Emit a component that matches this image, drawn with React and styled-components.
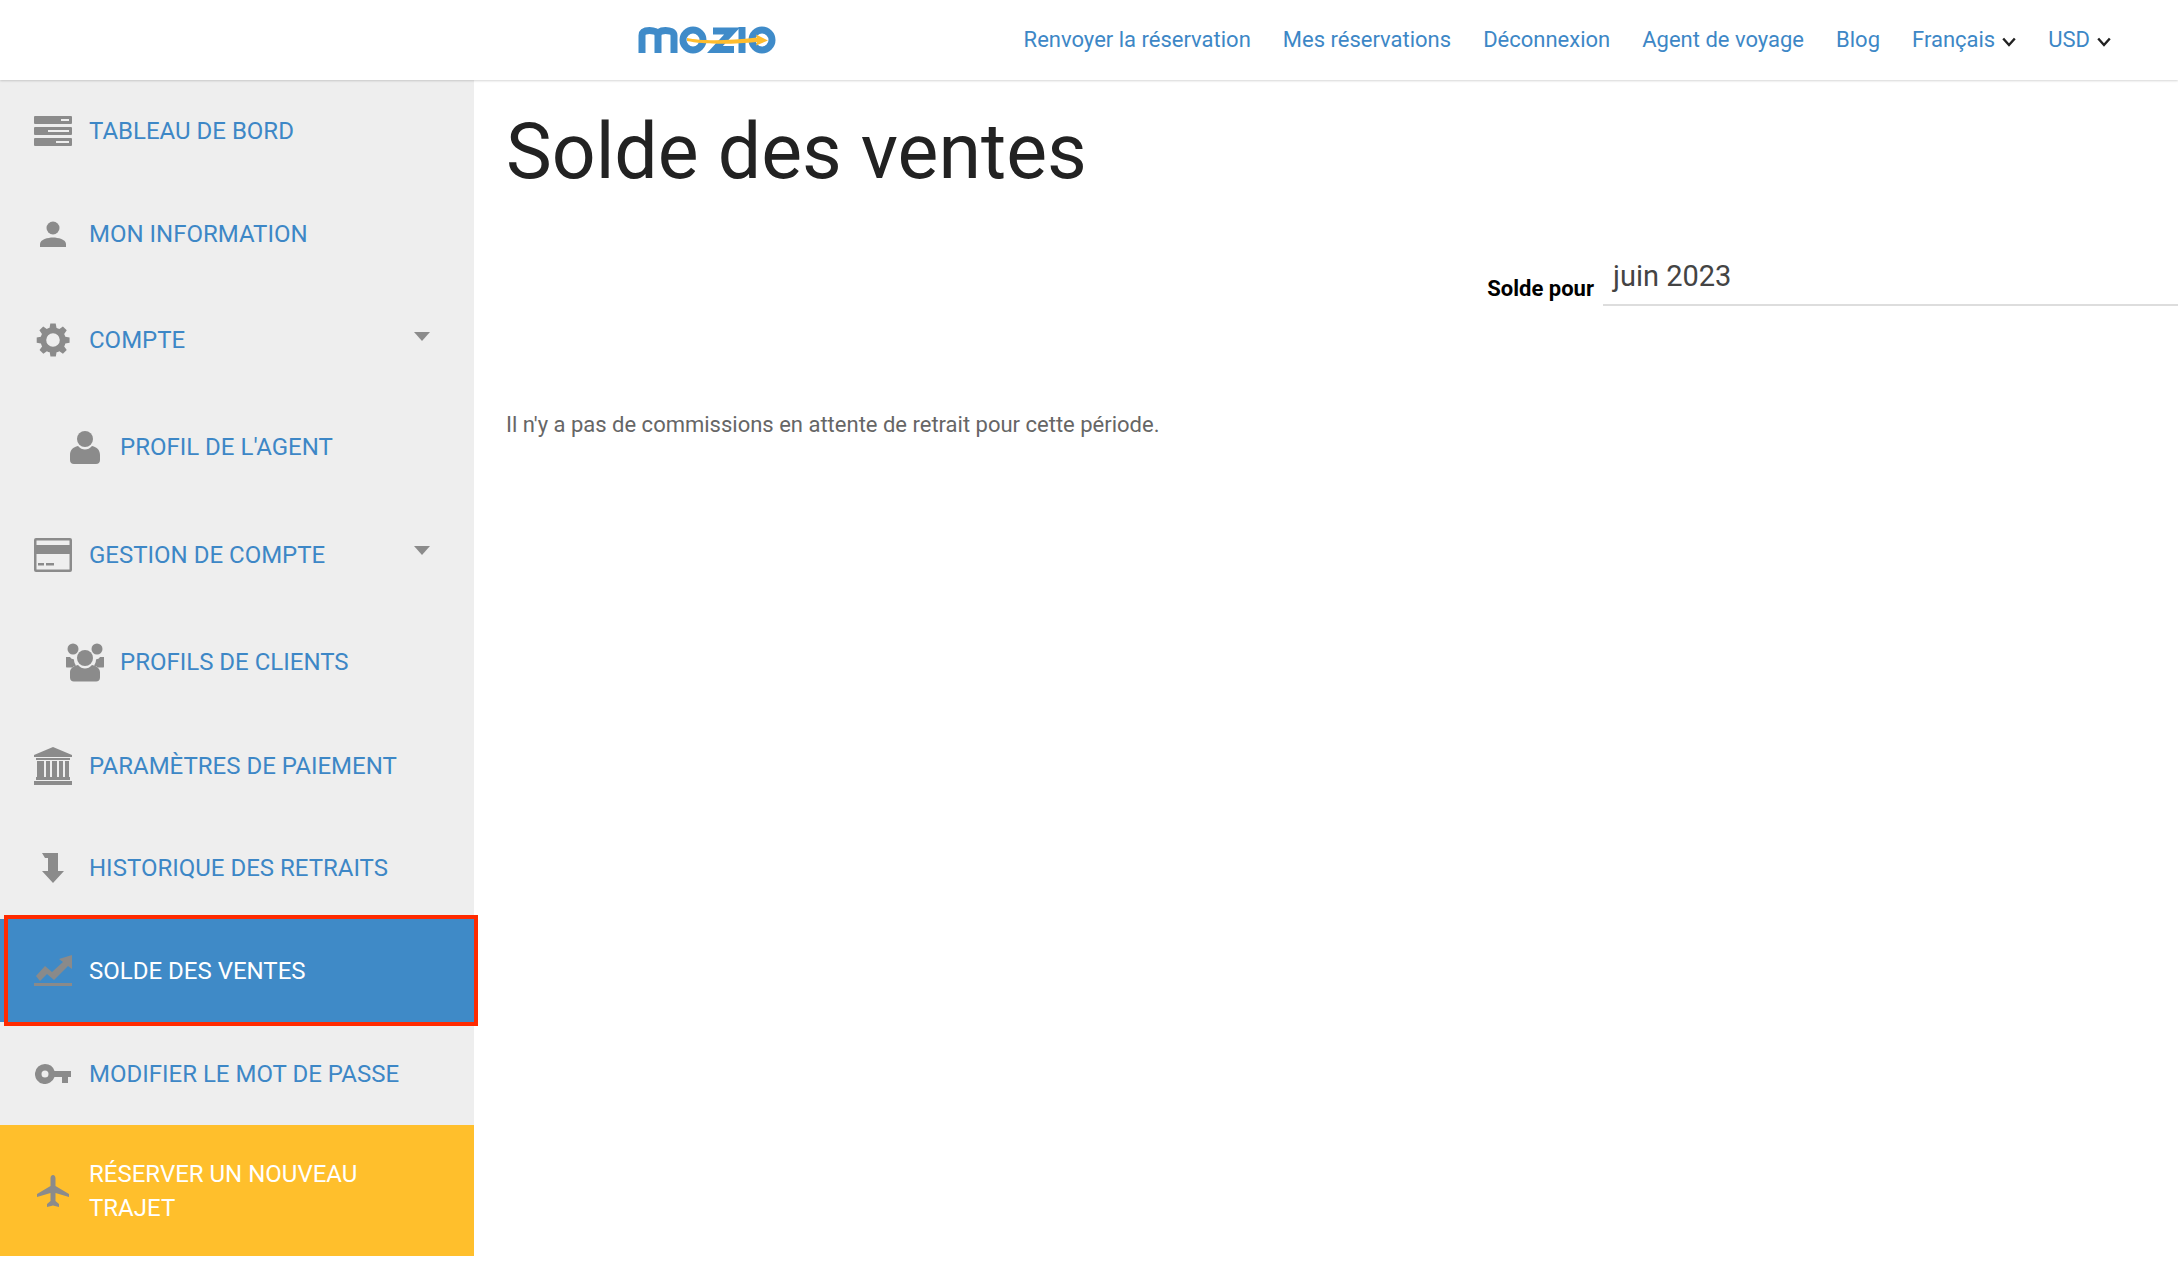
import styled, { createGlobalStyle } from "styled-components";

const Global = createGlobalStyle`
    html, body {
        margin: 0;
        padding: 0;
        background: #fff;
    }
    body {
        font-family: Roboto, "Liberation Sans", sans-serif;
    }
`;

const Shape = ({ w = 38, h = 38, box = "0 0 38 38", children }) => (
    <svg width={w} height={h} viewBox={box} fill="#8b8b8b">{children}</svg>
);

const ServerIcon = () => (
    <Shape h={30} box="0 0 38 30">
        <rect y="0" width="38" height="8" rx="1" />
        <rect y="11" width="38" height="8" rx="1" />
        <rect y="22" width="38" height="8" rx="1" />
        <rect x="27" y="3" width="8" height="2" fill="#eee" />
        <rect x="14" y="14" width="21" height="2" fill="#eee" />
        <rect x="22" y="25" width="13" height="2" fill="#eee" />
    </Shape>
);

const PersonIcon = () => (
    <Shape w={26} h={26} box="0 0 26 26">
        <circle cx="13" cy="7" r="6.5" />
        <path d="M0 26v-3c0-4.5 8-6.5 13-6.5s13 2 13 6.5v3z" />
    </Shape>
);

const GearIcon = () => (
    <Shape w={34} h={34} box="0 0 24 24">
        <path d="M13.9 1h-3.8l-.5 3a8.300 8.300 0 0 0-2 .8L5.100 3.100 2.400 5.800l1.800 2.500a8.300 8.300 0 0 0-.8 2L.5 10.800v3.800l3 .5c.2.700.4 1.300.8 2l-1.800 2.500 2.700 2.700 2.500-1.800c.6.400 1.300.6 2 .8l.5 3h3.800l.5-3c.7-.2 1.300-.4 2-.8l2.500 1.800 2.700-2.700-1.800-2.500c.4-.6.600-1.300.8-2l3-.5v-3.800l-3-.5a8.300 8.300 0 0 0-.8-2l1.800-2.500-2.700-2.700-2.500 1.800a8.300 8.300 0 0 0-2-.8zM12 7.800a4.800 4.800 0 1 1 0 9.600 4.800 4.800 0 0 1 0-9.600z" fillRule="evenodd" transform="translate(0 -.6)" />
    </Shape>
);

const AgentIcon = () => (
    <Shape w={30} h={33} box="0 0 30 33">
        <circle cx="15" cy="8" r="8" />
        <path d="M8 15c2 2.500 4.500 3.500 7 3.500s5-1 7-3.500c5 1 8 4 8 9v5c0 2.500-1.500 4-4 4H4c-2.500 0-4-1.500-4-4v-5c0-5 3-8 8-9z" />
    </Shape>
);

const CardIcon = () => (
    <Shape h={34} box="0 0 38 34">
        <path d="M2 0h34a2 2 0 0 1 2 2v30a2 2 0 0 1-2 2H2a2 2 0 0 1-2-2V2a2 2 0 0 1 2-2zm.5 2.500V7h33V2.500zm0 13v16h33v-16z" fillRule="evenodd" />
        <rect x="2" y="9" width="34" height="7" />
        <rect x="4" y="25" width="6" height="2.500" />
        <rect x="12" y="25" width="8" height="2.500" />
    </Shape>
);

const ClientsIcon = () => (
    <Shape h={39} box="0 0 38 39">
        <circle cx="7" cy="6" r="5.500" />
        <circle cx="31" cy="6" r="5.500" />
        <path d="M0 14l4 0c1 1.500 2 2 4 2.500 0 2 .5 4 2 6-1.500.5-3 1-3.500 2H1c-.7 0-1-.5-1-1z" />
        <path d="M38 14l-4 0c-1 1.500-2 2-4 2.500 0 2-.5 4-2 6 1.500.5 3 1 3.500 2H37c.7 0 1-.5 1-1z" />
        <circle cx="19" cy="15" r="8" />
        <path d="M12 22c2 2.500 4.500 3.500 7 3.500s5-1 7-3.500c5 1 8 3.500 8 7.500v5c0 2.500-1.500 4-4 4H8c-2.500 0-4-1.500-4-4v-5c0-4 3-6.500 8-7.500z" />
    </Shape>
);

const BankIcon = () => (
    <Shape box="0 0 38 38">
        <path d="M19 0l19 8v2H0V8z" />
        <rect x="2" y="11" width="34" height="2" />
        <rect x="3" y="14" width="7" height="16" />
        <rect x="12" y="14" width="4" height="16" />
        <rect x="18" y="14" width="5" height="16" />
        <rect x="25" y="14" width="4" height="16" />
        <rect x="31" y="14" width="4" height="16" />
        <rect x="2" y="30" width="34" height="3" />
        <rect y="34" width="38" height="4" />
    </Shape>
);

const WithdrawIcon = () => (
    <Shape w={22} h={30} box="0 0 22 30">
        <path d="M0 0h16v18h6L11 30 0 18h6V5H3z" />
    </Shape>
);

const TrendIcon = () => (
    <Shape h={31} box="0 0 38 31">
        <path d="M2 21l9-10 7 6L29 7l-4-3 13-4v14l-4-3-14 14-7-6-7 7z" fill="#8a8a8a" />
        <rect y="28" width="38" height="3" fill="#8a8a8a" />
    </Shape>
);

const KeyIcon = () => (
    <Shape w={36} h={20} box="0 0 36 20">
        <path d="M10 0a10 10 0 0 1 9.500 7H36v6h-3v6h-6v-6h-7.500A10 10 0 1 1 10 0zm0 6.500a3.500 3.500 0 1 0 0 7 3.500 3.500 0 0 0 0-7z" fillRule="evenodd" />
    </Shape>
);

const PlaneIcon = () => (
    <Shape w={32} h={32} box="0 0 32 32">
        <path d="M16 0c1.500 0 2.500 1.500 2.500 3.500V11L32 19v3l-13.500-4v8l3.500 3v3l-6-1.500L10 32v-3l3.500-3v-8L0 22v-3l13.500-8V3.500C13.500 1.500 14.500 0 16 0z" />
    </Shape>
);

const ChevronIcon = () => (
    <svg width="14" height="10" viewBox="0 0 14 10" fill="none" stroke="#222" strokeWidth="2.400">
        <path d="M1.200 1.500L7 8l5.800-6.500" />
    </svg>
);

const Logo = () => (
    <svg width="138" height="28" viewBox="0 0 138 28">
        <g fill="none" stroke="#3f8bc9" strokeWidth="7">
            <path d="M4 27V9.500C4 6 7 4.500 11.500 4.500S20 6 20 9.500V27M20 9.500C20 6 23 4.500 27.500 4.500S36 6 36 9.500V27" />
            <circle cx="55" cy="14" r="10" />
            <path d="M75 5h19L77 23.500h19" />
            <path d="M104 1v26" />
            <circle cx="124" cy="14" r="10" />
        </g>
        <path d="M49 12c14 3 40 3 70-.5l-1-3 12 6-12 5 1-3.500c-28 3-56 2-70-1z" fill="#ffbd2e" />
    </svg>
);

const menu = [
    { label: "TABLEAU DE BORD", icon: <ServerIcon />, height: 102 },
    { label: "MON INFORMATION", icon: <PersonIcon />, height: 104 },
    { label: "COMPTE", icon: <GearIcon />, height: 108, caret: true },
    { label: "PROFIL DE L'AGENT", icon: <AgentIcon />, height: 106, sub: true },
    { label: "GESTION DE COMPTE", icon: <CardIcon />, height: 110, caret: true },
    { label: "PROFILS DE CLIENTS", icon: <ClientsIcon />, height: 104, sub: true },
    { label: "PARAMÈTRES DE PAIEMENT", icon: <BankIcon />, height: 103 },
    { label: "HISTORIQUE DES RETRAITS", icon: <WithdrawIcon />, height: 102 },
    { label: "SOLDE DES VENTES", icon: <TrendIcon />, height: 103, active: true },
    { label: "MODIFIER LE MOT DE PASSE", icon: <KeyIcon />, height: 103 },
];

const links = ["Renvoyer la réservation", "Mes réservations", "Déconnexion", "Agent de voyage", "Blog"];

export default function App() {
    return (
        <Page>
            <Global />
            <Header>
                <LogoSlot><Logo /></LogoSlot>
                <Nav>
                    {links.map((l) => <NavLink key={l}>{l}</NavLink>)}
                    <NavLink>Français <ChevronIcon /></NavLink>
                    <NavLink>USD <ChevronIcon /></NavLink>
                </Nav>
            </Header>
            <Body>
                <Sidebar>
                    {menu.map((m) => (
                        <Item key={m.label} $height={m.height} $sub={m.sub} $active={m.active}>
                            <IconSlot>{m.icon}</IconSlot>
                            <span>{m.label}</span>
                            {m.caret && <Caret />}
                            {m.active && <Highlight />}
                        </Item>
                    ))}
                    <BookItem>
                        <IconSlot><PlaneIcon /></IconSlot>
                        <span>RÉSERVER UN NOUVEAU TRAJET</span>
                    </BookItem>
                </Sidebar>
                <Main>
                    <Title>Solde des ventes</Title>
                    <BalanceRow>
                        <BalanceLabel>Solde pour</BalanceLabel>
                        <MonthField>juin 2023</MonthField>
                    </BalanceRow>
                    <Note>Il n'y a pas de commissions en attente de retrait pour cette période.</Note>
                </Main>
            </Body>
        </Page>
    );
}

const Page = styled.div`
    width: 2178px;
    height: 1266px;
    overflow: hidden;
    background: #fff;
`;

const Header = styled.header`
    position: relative;
    z-index: 2;
    height: 80px;
    display: flex;
    align-items: center;
    justify-content: space-between;
    background: #fff;
    box-shadow: 0 1px 2px rgba(0, 0, 0, 0.16);
`;

const LogoSlot = styled.div`
    display: flex;
    margin-left: 638px;
    margin-top: 0;
`;

const Nav = styled.nav`
    display: flex;
    align-items: center;
    gap: 32px;
    margin-right: 67px;
`;

const NavLink = styled.a`
    display: flex;
    align-items: center;
    gap: 7px;
    color: #3d87c6;
    font-size: 22px;
    line-height: 28px;
    white-space: nowrap;

    svg {
        margin-top: 4px;
    }
`;

const Body = styled.div`
    display: flex;
    align-items: flex-start;
`;

const Sidebar = styled.aside`
    width: 474px;
    flex-shrink: 0;
    background: #eee;
`;

const Item = styled.div`
    position: relative;
    height: ${(p) => p.$height}px;
    display: flex;
    align-items: center;
    padding-left: ${(p) => (p.$sub ? 66 : 34)}px;
    gap: ${(p) => (p.$sub ? 16 : 17)}px;
    background: ${(p) => (p.$active ? "#3f8ac7" : "transparent")};
    color: ${(p) => (p.$active ? "#fff" : "#3d87c6")};
    font-size: 24px;
    line-height: 34px;
    box-sizing: border-box;
`;

const BookItem = styled(Item)`
    height: 131px;
    padding-right: 60px;
    background: #ffbf2c;
    color: #fff;
`;

const IconSlot = styled.div`
    width: 38px;
    flex-shrink: 0;
    display: flex;
    align-items: center;
    justify-content: center;
`;

const Caret = styled.i`
    position: absolute;
    right: 44px;
    top: 46px;
    width: 0;
    height: 0;
    border-left: 8px solid transparent;
    border-right: 8px solid transparent;
    border-top: 9px solid #8b8b8b;
`;

const Highlight = styled.div`
    position: absolute;
    left: 4px;
    right: -4px;
    top: -4px;
    bottom: -4px;
    border: 4px solid #ff2a00;
`;

const Main = styled.main`
    flex: 1;
    min-width: 0;
    padding-left: 32px;
`;

const Title = styled.h1`
    margin: 22px 0 0;
    color: #222;
    font-size: 77px;
    font-weight: 400;
    line-height: 100px;
`;

const BalanceRow = styled.div`
    display: flex;
    justify-content: flex-end;
    align-items: flex-end;
    gap: 9px;
    margin-top: 56px;
`;

const BalanceLabel = styled.label`
    color: #000;
    font-size: 22px;
    font-weight: 700;
    line-height: 30px;
    padding-bottom: 2px;
`;

const MonthField = styled.div`
    width: 565px;
    padding: 0 0 10px 10px;
    border-bottom: 2px solid #ddd;
    color: #444;
    font-size: 29px;
    line-height: 36px;
`;

const Note = styled.p`
    margin: 104px 0 0;
    color: #666;
    font-size: 22px;
    line-height: 30px;
`;
